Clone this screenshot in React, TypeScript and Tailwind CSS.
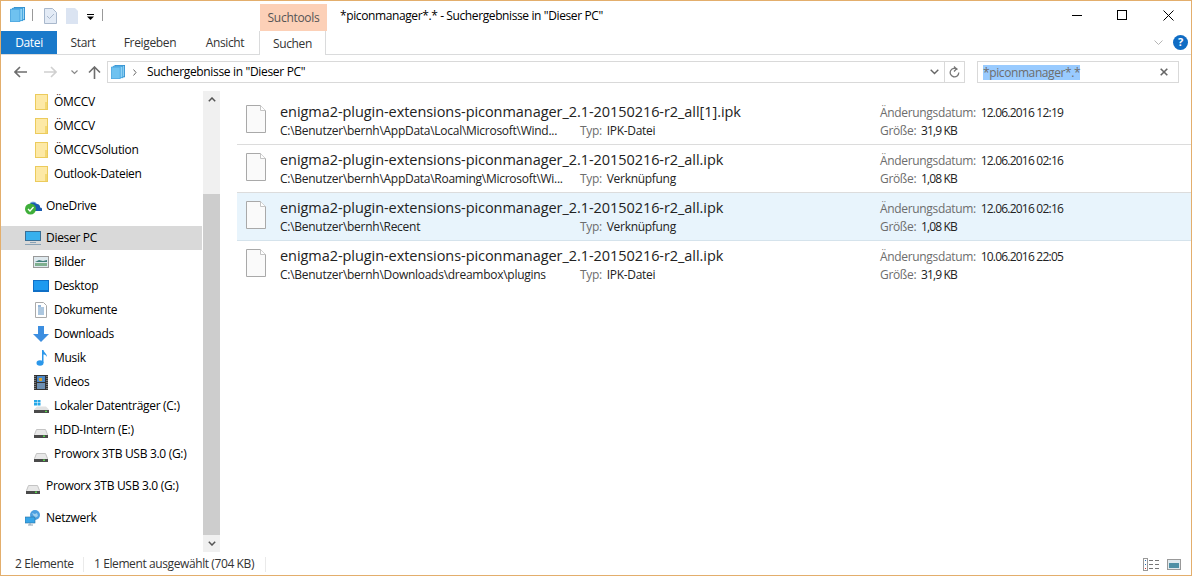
import React from 'react';

const FONT = "font-['Open_Sans','Noto_Sans',sans-serif]";

const LibraryIcon = ({ size = 16 }: { size?: number }) => (
  <svg width={size} height={size} viewBox="0 0 16 16" className="shrink-0">
    <rect x="4.5" y="0.5" width="11" height="13" fill="#a8dcf6" stroke="#2f8fd0" />
    <rect x="2.5" y="1.5" width="11" height="13" fill="#8fd2f5" stroke="#3b9fdc" />
    <rect x="0.5" y="2.5" width="10" height="13" fill="#6fc2f0" stroke="#4fa9e2" />
  </svg>
);

const FolderIcon = () => (
  <svg width="14" height="16" viewBox="0 0 14 16" className="shrink-0">
    <rect x="1.5" y="0.5" width="12" height="15" fill="#fde9a6" stroke="#eccb5c" />
    <rect x="11" y="8" width="2" height="7" fill="#f3d873" />
  </svg>
);

const DriveIcon = () => (
  <svg width="14" height="9" viewBox="0 0 14 9" className="shrink-0 mt-[6px]">
    <path d="M2.5 0.5h9l2 5v3H0.500v-3z" fill="#e8e8e8" stroke="#c4c4c4" />
    <rect x="0" y="6" width="14" height="3" fill="#4a4a4a" />
    <rect x="9" y="6.500" width="2" height="1.500" fill="#55d24a" />
  </svg>
);

const Row = ({ children, icon, indent, selected }: { children: string; icon: React.ReactNode; indent: 'b' | 'c'; selected?: boolean }) => (
  <div className={`h-6 flex items-center shrink-0 ${selected ? 'bg-[#d9d9d9]' : ''}`}>
    <div className={`${indent === 'b' ? 'w-[53px] pl-[32px]' : 'w-[45px] pl-[24px]'} box-border shrink-0 flex`}>
      <div className="shrink-0 w-[16px] flex justify-center">{icon}</div>
    </div>
    <span className="text-[12px] text-black whitespace-nowrap tracking-[-0.3px]">{children}</span>
  </div>
);

const files = [
  { name: 'enigma2-plugin-extensions-piconmanager_2.1-20150216-r2_all[1].ipk', path: 'C:\\Benutzer\\bernh\\AppData\\Local\\Microsoft\\Wind...', type: 'IPK-Datei', date: '12.06.2016 12:19', size: '31,9 KB' },
  { name: 'enigma2-plugin-extensions-piconmanager_2.1-20150216-r2_all.ipk', path: 'C:\\Benutzer\\bernh\\AppData\\Roaming\\Microsoft\\Wi...', type: 'Verknüpfung', date: '12.06.2016 02:16', size: '1,08 KB' },
  { name: 'enigma2-plugin-extensions-piconmanager_2.1-20150216-r2_all.ipk', path: 'C:\\Benutzer\\bernh\\Recent', type: 'Verknüpfung', date: '12.06.2016 02:16', size: '1,08 KB', selected: true },
  { name: 'enigma2-plugin-extensions-piconmanager_2.1-20150216-r2_all.ipk', path: 'C:\\Benutzer\\bernh\\Downloads\\dreambox\\plugins', type: 'IPK-Datei', date: '10.06.2016 22:05', size: '31,9 KB', last: true },
];

export default function App() {
  return (
    <div className={`w-[1192px] h-[576px] box-border border border-[#e3ae6c] bg-white flex flex-col overflow-hidden ${FONT}`}>
      {/* title bar */}
      <div className="h-[30px] flex shrink-0">
        <div className="w-[259px] pl-[9px] pt-[6px] flex items-start">
          <LibraryIcon size={15} />
          <div className="w-px h-3 bg-[#999] mt-[2px] ml-[7px]" />
          <svg width="13" height="16" viewBox="0 0 13 16" className="mt-[1px] ml-[11px] shrink-0">
            <path d="M.5.5h8l4 4v11H.5z" fill="#e3ebf6" stroke="#a9b8cc" />
            <path d="M3 8l2.500 2.500L10 6" fill="none" stroke="#a9b8cc" />
          </svg>
          <svg width="12" height="16" viewBox="0 0 12 16" className="mt-[1px] ml-[9px] shrink-0">
            <path d="M0 0h9l3 3v13H0z" fill="#dbe4f2" />
          </svg>
          <svg width="7" height="6" viewBox="0 0 7 6" className="mt-[7px] ml-[9px] shrink-0">
            <rect width="7" height="1" fill="#000" />
            <path d="M0 2.500h7L3.500 6z" fill="#000" />
          </svg>
          <div className="w-px h-3 bg-[#999] mt-[2px] ml-[8px]" />
        </div>
        <div className="w-[67px] mt-[3px] bg-[#fcd0b7] flex items-center justify-center text-[12px] text-[#555] tracking-[-0.3px]">Suchtools</div>
        <div className="flex-1 pl-[13px] pt-[6px] text-[12px] text-black tracking-[-0.39px] whitespace-nowrap">*piconmanager*.* - Suchergebnisse in "Dieser PC"</div>
        <div className="flex w-[136px] shrink-0">
          <div className="w-[44px] flex justify-center pt-[14px]"><div className="w-[10px] h-px bg-black" /></div>
          <div className="w-[46px] flex justify-center pt-[9px]"><div className="w-[10px] h-[10px] border border-black" /></div>
          <div className="w-[46px] flex justify-center pt-[9px]">
            <svg width="11" height="11" viewBox="0 0 11 11"><path d="M.5.5l10 10M10.500.5l-10 10" stroke="#000" fill="none" /></svg>
          </div>
        </div>
      </div>

      {/* ribbon tabs */}
      <div className="h-[24px] shrink-0 flex border-b border-[#dadbdc] box-border text-[12px] text-[#333] tracking-[-0.35px]">
        <div className="w-[56px] bg-[#1979ca] text-white flex items-center justify-center pt-[1px]">Datei</div>
        <div className="w-[52px] flex items-center justify-center pt-[1px]">Start</div>
        <div className="w-[82px] flex items-center justify-center pt-[1px]">Freigeben</div>
        <div className="w-[68px] flex items-center justify-center pt-[1px]">Ansicht</div>
        <div className="w-[67px] h-[24px] bg-white border-x border-[#dadbdc] box-border flex items-center justify-center pt-[1px]">Suchen</div>
        <div className="flex-1 flex items-center justify-end pr-[3px] gap-[10px]">
          <svg width="9" height="6" viewBox="0 0 9 6"><path d="M.5.5l4 4 4-4" fill="none" stroke="#b5b5b5" /></svg>
          <div className="w-[15px] h-[15px] rounded-full bg-[#0f6cc4] text-white text-[11px] font-bold flex items-center justify-center">?</div>
        </div>
      </div>

      {/* address row */}
      <div className="h-[34px] shrink-0 flex items-center pl-[13px] pr-[13px]">
        <svg width="13" height="12" viewBox="0 0 13 12" className="shrink-0"><path d="M6 1L1 6l5 5M1 6h12" fill="none" stroke="#6d6d6d" strokeWidth="1.600" /></svg>
        <svg width="13" height="12" viewBox="0 0 13 12" className="ml-[17px] shrink-0"><path d="M7 1l5 5-5 5M12 6H0" fill="none" stroke="#d0d0d0" strokeWidth="1.600" /></svg>
        <svg width="7" height="5" viewBox="0 0 7 5" className="ml-[14px] shrink-0"><path d="M.5.5l3 3 3-3" fill="none" stroke="#888" strokeWidth="1.200" /></svg>
        <svg width="13" height="13" viewBox="0 0 13 13" className="ml-[10px] shrink-0"><path d="M1 6.500l5.500-5.500 5.500 5.500M6.500 1v12" fill="none" stroke="#6d6d6d" strokeWidth="1.600" /></svg>
        <div className="ml-[6px] w-[858px] h-[22px] box-border border border-[#d9d9d9] flex items-center shrink-0">
          <div className="ml-[3px]"><LibraryIcon size={14} /></div>
          <svg width="4" height="7" viewBox="0 0 4 7" className="ml-[8px] shrink-0"><path d="M.5.500l2.500 3-2.500 3" fill="none" stroke="#666" /></svg>
          <span className="ml-[10px] text-[12px] text-black tracking-[-0.33px] whitespace-nowrap">Suchergebnisse in "Dieser PC"</span>
          <div className="flex-1" />
          <svg width="9" height="6" viewBox="0 0 9 6" className="mr-[5px] shrink-0"><path d="M.7.700l3.800 3.800 3.800-3.800" fill="none" stroke="#666" strokeWidth="1.400" /></svg>
          <div className="w-[20px] h-full border-l border-[#d9d9d9] flex items-center justify-center">
            <svg width="11" height="12" viewBox="0 0 11 12"><path d="M8.500 3.500A4.300 4.300 0 1 0 9.800 6.500M5 .5l2.500 2.500L5 5.500" fill="none" stroke="#777" strokeWidth="1.300" /></svg>
          </div>
        </div>
        <div className="ml-[12px] w-[202px] h-[22px] box-border border border-[#d9d9d9] flex items-center pl-[5px] pr-[10px] shrink-0">
          <span className="bg-[#99cbff] text-[12px] text-[#6d6d6d] leading-[15px] whitespace-nowrap tracking-[-0.4px]">*piconmanager*.*</span>
          <div className="flex-1" />
          <svg width="8" height="8" viewBox="0 0 8 8"><path d="M.7.700l6.600 6.600M7.300.700L.7 7.300" stroke="#666" strokeWidth="1.600" /></svg>
        </div>
      </div>

      {/* body */}
      <div className="flex-1 min-h-0 flex">
        <div className="w-[201px] shrink-0 flex flex-col pt-[1px]">
          {['ÖMCCV', 'ÖMCCV', 'ÖMCCVSolution', 'Outlook-Dateien'].map((n, i) => (
            <Row key={i} indent="b" icon={<FolderIcon />}>{n}</Row>
          ))}
          <div className="h-2 shrink-0" />
          <Row indent="c" icon={
            <svg width="17" height="15" viewBox="0 0 17 15" className="mt-[3px] shrink-0">
              <path d="M4 6.500a4.500 4.500 0 0 1 8-2.500 3 3 0 0 1 3 3.500 2.300 2.300 0 0 1 2 3.500H5z" fill="#1a5bb0" />
              <path d="M5 3.500a4 4 0 0 1 6 0" fill="none" stroke="#5d93d6" />
              <circle cx="5.500" cy="9" r="5.500" fill="#3fae3a" />
              <path d="M3 9l2 2 3.500-4" fill="none" stroke="#fff" strokeWidth="1.300" />
            </svg>
          }>OneDrive</Row>
          <div className="h-2 shrink-0" />
          <Row selected indent="c" icon={
            <svg width="16" height="14" viewBox="0 0 16 14"><rect x=".5" y=".5" width="15" height="9" fill="#38b0ee" stroke="#3a6f95" /><path d="M5 11.500h6M0 13.500h16" stroke="#8aa2b5" /></svg>
          }>Dieser PC</Row>
          <Row indent="b" icon={
            <svg width="16" height="12" viewBox="0 0 16 12"><rect x=".5" y=".5" width="15" height="11" fill="#dfe9ee" stroke="#999" /><path d="M2 6l4-2 4 1 4-1v2z" fill="#3f7d7a" /><rect x="2" y="7" width="12" height="3" fill="#7fb08f" /></svg>
          }>Bilder</Row>
          <Row indent="b" icon={
            <svg width="16" height="12" viewBox="0 0 16 12"><rect width="16" height="12" fill="#0f6fc6" /><rect x="1" y="1" width="14" height="9" fill="#1e9af0" /></svg>
          }>Desktop</Row>
          <Row indent="b" icon={
            <svg width="12" height="16" viewBox="0 0 12 16"><path d="M.5.500h8l3 3v12H.5z" fill="#fff" stroke="#aaa" /><path d="M3 6h6M3 8h6M3 10h6M3 12h6" stroke="#5b8fc0" /><path d="M3 4h3" stroke="#2c6fb3" /></svg>
          }>Dokumente</Row>
          <Row indent="b" icon={
            <svg width="16" height="16" viewBox="0 0 16 16"><path d="M5 0h6v8h5l-8 8-8-8h5z" fill="#3c8ee0" /></svg>
          }>Downloads</Row>
          <Row indent="b" icon={
            <svg width="11" height="16" viewBox="0 0 11 16"><ellipse cx="4" cy="13" rx="3.500" ry="2.800" fill="#2b97ea" /><path d="M6 13V0h1.500c.5 3 3.500 3.500 3.500 7-1-2-2.500-2.500-3.500-2.500V13z" fill="#2b97ea" /></svg>
          }>Musik</Row>
          <Row indent="b" icon={
            <svg width="14" height="15" viewBox="0 0 14 15"><rect width="14" height="15" fill="#333" /><rect x="3" y="1" width="8" height="6" fill="#4b88c7" /><rect x="3" y="8" width="8" height="6" fill="#6d8fb2" /><rect x="5" y="3" width="3" height="3" fill="#d9a32e" /><path d="M1 1v13M13 1v13" stroke="#bbb" strokeDasharray="1 1" /></svg>
          }>Videos</Row>
          <Row indent="b" icon={
            <svg width="15" height="13" viewBox="0 0 15 13"><rect x="0" y="0" width="3" height="2.500" fill="#25a8e8" /><rect x="3.500" y="0" width="3" height="2.500" fill="#25a8e8" /><rect x="0" y="3" width="3" height="2.500" fill="#25a8e8" /><rect x="3.500" y="3" width="3" height="2.500" fill="#25a8e8" /><path d="M3 6.500h9l3 3V13H0V9.500z" fill="#e2e2e2" /><rect y="10" width="15" height="3" fill="#4a4a4a" /><rect x="11" y="10.800" width="2" height="1.300" fill="#55d24a" /></svg>
          }>Lokaler Datenträger (C:)</Row>
          <Row indent="b" icon={<DriveIcon />}>HDD-Intern (E:)</Row>
          <Row indent="b" icon={<DriveIcon />}>Proworx 3TB USB 3.0 (G:)</Row>
          <div className="h-2 shrink-0" />
          <Row indent="c" icon={<DriveIcon />}>Proworx 3TB USB 3.0 (G:)</Row>
          <div className="h-2 shrink-0" />
          <Row indent="c" icon={
            <svg width="16" height="16" viewBox="0 0 16 16"><circle cx="10" cy="5" r="5" fill="#4c9fe0" /><path d="M7 3l3 1 2-1 1 3-3 2z" fill="#9fd0ef" /><rect x="0" y="7" width="10" height="6" fill="#38a5e8" stroke="#2a6f9f" strokeWidth=".6" /><path d="M3 15h5M5 13v2" stroke="#8aa2b5" /></svg>
          }>Netzwerk</Row>
        </div>

        {/* nav scrollbar */}
        <div className="ml-[1px] w-[17px] shrink-0 bg-[#f0f0f0] flex flex-col mt-[2px] mb-[1px]">
          <div className="h-[17px] shrink-0 flex items-center justify-center">
            <svg width="8" height="5" viewBox="0 0 8 5"><path d="M.8 4.200L4 1l3.200 3.200" fill="none" stroke="#555" strokeWidth="1.500" /></svg>
          </div>
          <div className="h-[86px] shrink-0" />
          <div className="flex-1 bg-[#cdcdcd]" />
          <div className="h-[17px] shrink-0 flex items-center justify-center">
            <svg width="8" height="5" viewBox="0 0 8 5"><path d="M.8.800L4 4l3.200-3.200" fill="none" stroke="#555" strokeWidth="1.500" /></svg>
          </div>
        </div>

        {/* results */}
        <div className="flex-1 min-w-0 pl-[17px] pt-[8px] flex flex-col">
          {files.map((f, i) => (
            <div
              key={i}
              className={`h-[48px] shrink-0 box-border flex ${f.selected ? 'bg-[#e8f4fc]' : ''} ${f.last ? '' : f.selected ? 'border-b border-[#d5e3ec]' : 'border-b border-[#dcdcdc]'}`}
            >
              <div className="w-[43px] shrink-0 pl-[9px] pt-[8px]">
                <svg width="20" height="28" viewBox="0 0 20 28">
                  <path d="M.5.5h14l5 5v22H.5z" fill="#fafafa" stroke="#a9a9a9" />
                  <path d="M14.500.5v5h5" fill="#fff" stroke="#c4c4c4" />
                </svg>
              </div>
              <div className="w-[300px] shrink-0 pt-[5px]">
                <div className="text-[14.500px] leading-[20px] text-[#222] whitespace-nowrap tracking-[-0.06px]">{f.name}</div>
                <div className="text-[12px] leading-[17px] text-[#222] whitespace-nowrap tracking-[-0.27px]">{f.path}</div>
              </div>
              <div className="w-[300px] shrink-0 pt-[25px] text-[12px] leading-[17px] whitespace-nowrap tracking-[-0.3px]">
                <span className="text-[#6d6d6d]">Typ:</span> <span className="text-[#222] ml-[2px]">{f.type}</span>
              </div>
              <div className="pt-[7px] text-[12px] leading-[18px] whitespace-nowrap tracking-[-0.33px]">
                <div><span className="text-[#6d6d6d]">Änderungsdatum:</span> <span className="text-[#222] ml-[2px] tracking-[-0.78px]">{f.date}</span></div>
                <div><span className="text-[#6d6d6d]">Größe:</span> <span className="text-[#222] ml-[2px] tracking-[-0.85px]">{f.size}</span></div>
              </div>
            </div>
          ))}
        </div>
      </div>

      {/* status bar */}
      <div className="h-[22px] shrink-0 flex items-center text-[12px] text-[#333] tracking-[-0.4px]">
        <span className="ml-[14px] w-[68px] whitespace-nowrap">2 Elemente</span>
        <div className="w-px h-[15px] bg-[#eaeaea]" />
        <span className="ml-[10px] w-[171px] whitespace-nowrap">1 Element ausgewählt (704 KB)</span>
        <div className="w-px h-[15px] bg-[#eaeaea]" />
        <div className="flex-1" />
        <svg width="17" height="13" viewBox="0 0 17 13" className="shrink-0">
          <rect x=".5" y=".5" width="4" height="12" fill="#fff" stroke="#999" />
          <rect x="2" y="2" width="1" height="1" fill="#2c6fb3" /><rect x="2" y="6" width="1" height="1" fill="#2c6fb3" /><rect x="2" y="10" width="1" height="1" fill="#c33" />
          <path d="M6 2.500h4M12 2.500h4M6 6.500h4M12 6.500h4M6 10.500h4M12 10.500h4" stroke="#777" />
        </svg>
        <svg width="14" height="11" viewBox="0 0 14 11" className="ml-[7px] mr-[10px] shrink-0">
          <rect x=".5" y=".5" width="13" height="10" fill="#dfe9ee" stroke="#999" />
          <rect x="2" y="4" width="10" height="5" fill="#4f90a6" />
        </svg>
      </div>
    </div>
  );
}
